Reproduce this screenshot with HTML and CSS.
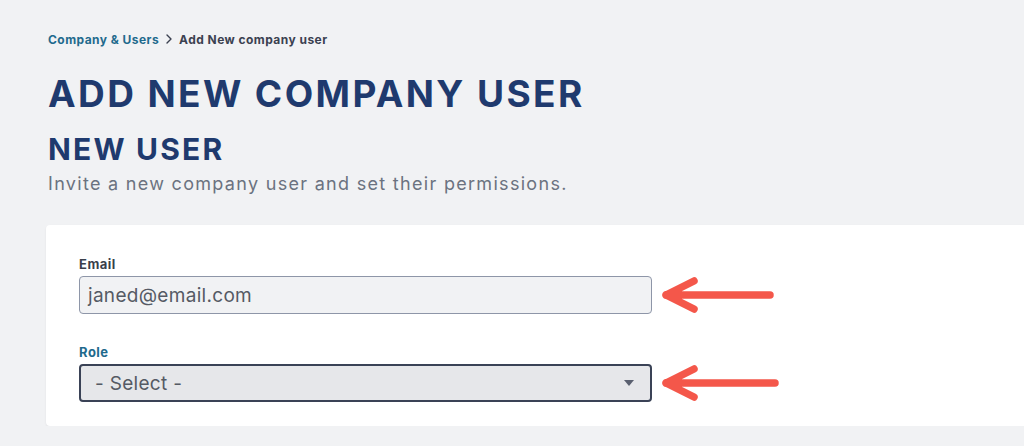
FILE: index.html
```html
<!DOCTYPE html>
<html>
<head>
<meta charset="utf-8">
<link rel="stylesheet" href="styles.css">
</head>
<body>
<main class="page">
  <nav class="crumbs">
    <a class="crumb-link">Company &amp; Users</a>
    <svg class="crumb-sep" width="8" height="10" viewBox="0 0 8 10"><path d="M2 1l4 4-4 4" fill="none" stroke="#3b4150" stroke-width="1.4" stroke-linecap="round" stroke-linejoin="round"/></svg>
    <span class="crumb-current">Add New company user</span>
  </nav>
  <h1 class="title">ADD NEW COMPANY USER</h1>
  <h2 class="subtitle">NEW USER</h2>
  <p class="lead">Invite a new company user and set their permissions.</p>
  <section class="card">
    <div class="field">
      <label class="label">Email</label>
      <div class="row">
        <div class="input">janed@email.com</div>
        <svg class="arrow" width="118" height="40" viewBox="0 0 118 40"><path d="M6 20H110M6 20L34 6M6 20L34 34" fill="none" stroke="#f4574a" stroke-width="7.5" stroke-linecap="round" stroke-linejoin="round"/></svg>
      </div>
    </div>
    <div class="field">
      <label class="label label-active">Role</label>
      <div class="row">
        <div class="select"><span>- Select -</span><svg width="10" height="6" viewBox="0 0 10 6"><path d="M0 0h10L5 6z" fill="#5a6070"/></svg></div>
        <svg class="arrow" width="124" height="40" viewBox="0 0 124 40"><path d="M6 20H115M6 20L34 6M6 20L34 34" fill="none" stroke="#f4574a" stroke-width="7.5" stroke-linecap="round" stroke-linejoin="round"/></svg>
      </div>
    </div>
  </section>
</main>
</body>
</html>
```
FILE: styles.css
```css
html, body {
  margin: 0;
  background: #f1f2f4;
  font-family: Inter, "Open Sans", sans-serif;
}
.page {
  padding: 31px 0 0 46px;
  overflow: hidden;
}
.crumbs {
  display: flex;
  align-items: center;
  gap: 6px;
  padding-left: 2px;
  font-size: 12px;
  font-weight: 700;
  letter-spacing: 0.45px;
  height: 16px;
}
.crumb-link { color: #1f6a8d; }
.crumb-current { color: #3b4150; }
.title {
  margin: 25px 0 0 2px;
  font-size: 37px;
  line-height: 44px;
  font-weight: 700;
  color: #1f3a6e;
  letter-spacing: 2.4px;
}
.subtitle {
  margin: 16px 0 0 2px;
  font-size: 30px;
  line-height: 34px;
  font-weight: 700;
  color: #1f3a6e;
  letter-spacing: 2.2px;
}
.lead {
  margin: 6px 0 0 2px;
  font-size: 18px;
  line-height: 24px;
  font-weight: 400;
  color: #6b7280;
  letter-spacing: 1.3px;
}
.card {
  margin-top: 29px;
  width: 1100px;
  background: #fff;
  border-radius: 4px;
  box-shadow: 0 1px 2px rgba(0,0,0,0.08);
  padding: 32px 0 23px 33px;
  box-sizing: border-box;
}
.field + .field { margin-top: 30px; }
.label {
  display: block;
  font-size: 13px;
  font-weight: 700;
  color: #3a3f4b;
  line-height: 14px;
  letter-spacing: 0.5px;
  margin-bottom: 4px;
}
.label-active { color: #1f6a8d; }
.row {
  display: flex;
  align-items: center;
  gap: 10px;
}
.input, .select {
  width: 573px;
  height: 38px;
  box-sizing: border-box;
  border-radius: 4px;
  display: flex;
  align-items: center;
  font-size: 19px;
  color: #555a64;
  letter-spacing: 0.3px;
}
.input {
  background: #f1f2f4;
  border: 1px solid #8e96a8;
  padding-left: 8px;
}
.select {
  background: #e6e7ea;
  border: 2px solid #3a4256;
  padding: 0 16px 0 14px;
  justify-content: space-between;
}
.arrow { display: block; margin-left: -2px; }
```
